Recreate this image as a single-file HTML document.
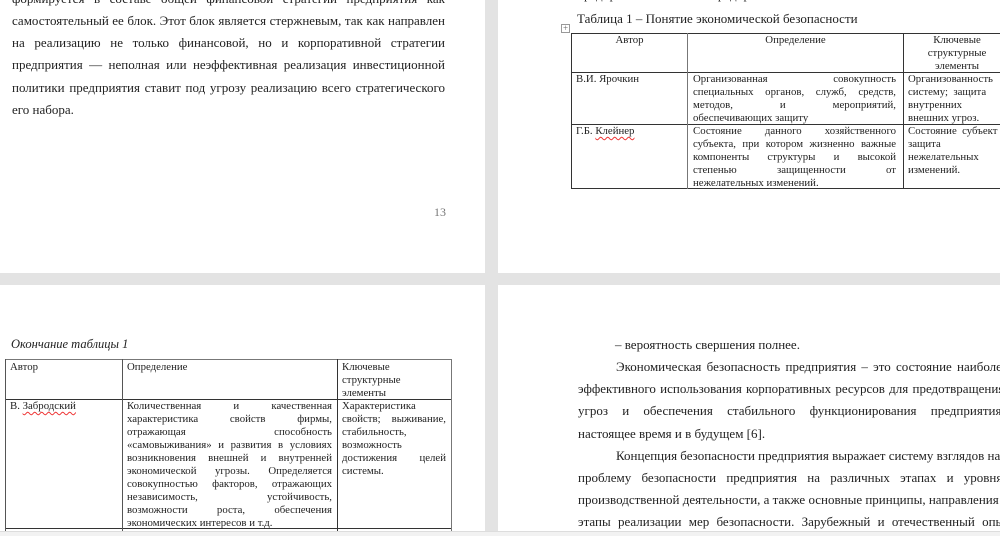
<!DOCTYPE html>
<html><head><meta charset="utf-8">
<style>
*{margin:0;padding:0;box-sizing:border-box}
body{width:1000px;height:536px;overflow:hidden;background:#e3e3e3;position:relative;font-family:"Liberation Serif","DejaVu Serif",serif;color:#222}
.page{position:absolute;background:#fff;overflow:hidden}
.l{position:absolute;white-space:nowrap;font-size:13px;line-height:16px}
.j{text-align:justify;text-align-last:justify}
.t{position:absolute;font-size:10.8px;line-height:13px;white-space:nowrap}
.hl{position:absolute;background:#333}
.red{text-decoration:underline wavy #e33;text-decoration-thickness:1px;text-underline-offset:2px}
</style></head><body>

<div class="page" style="left:0;top:0;width:485px;height:273px">
<div class="l j" style="left:12px;top:-9px;width:433px">формируется в составе общей финансовой стратегии предприятия как</div>
<div class="l j" style="left:12px;top:13px;width:433px">самостоятельный ее блок. Этот блок является стержневым, так как направлен</div>
<div class="l j" style="left:12px;top:35px;width:433px">на реализацию не только финансовой, но и корпоративной стратегии</div>
<div class="l j" style="left:12px;top:57px;width:433px">предприятия — неполная или неэффективная реализация инвестиционной</div>
<div class="l j" style="left:12px;top:80px;width:433px">политики предприятия ставит под угрозу реализацию всего стратегического</div>
<div class="l" style="left:12px;top:102px">его набора.</div>
<div class="l" style="left:434px;top:204px;color:#777;font-size:12px">13</div>
</div>

<div class="page" style="left:498px;top:0;width:502px;height:273px">
<div class="l" style="left:79px;top:-13px;word-spacing:60px">предприятия предприятия</div>
<div class="l" style="left:79px;top:11px">Таблица 1 – Понятие экономической безопасности</div>
<div style="position:absolute;left:63px;top:24px;width:9px;height:9px;border:1px solid #999;font-size:9px;line-height:7px;text-align:center;color:#666">+</div>
<div class="hl" style="left:73px;top:33px;width:440px;height:1px"></div>
<div class="hl" style="left:73px;top:72px;width:440px;height:1px"></div>
<div class="hl" style="left:73px;top:124px;width:440px;height:1px"></div>
<div class="hl" style="left:73px;top:188px;width:440px;height:1px"></div>
<div class="hl" style="left:73px;top:33px;width:1px;height:156px"></div>
<div class="hl" style="left:189px;top:33px;width:1px;height:156px;background:#777"></div>
<div class="hl" style="left:405px;top:33px;width:1px;height:156px"></div>
<div class="t" style="left:74px;top:34px;width:115px;text-align:center">Автор</div>
<div class="t" style="left:190px;top:34px;width:215px;text-align:center">Определение</div>
<div class="t" style="left:406px;top:34px;width:106px;text-align:center">Ключевые<br>структурные<br>элементы</div>
<div class="t" style="left:78px;top:73px">В.И. Ярочкин</div>
<div class="t j" style="left:195px;top:73px;width:203px">Организованная совокупность</div>
<div class="t j" style="left:195px;top:86px;width:203px">специальных органов, служб, средств,</div>
<div class="t j" style="left:195px;top:99px;width:203px">методов, и мероприятий,</div>
<div class="t" style="left:195px;top:112px">обеспечивающих защиту</div>
<div class="t" style="left:410px;top:73px">Организованность<br>систему; &nbsp;защита<br>внутренних<br>внешних угроз.</div>
<div class="t" style="left:78px;top:125px">Г.Б. <span class="red">Клейнер</span></div>
<div class="t j" style="left:195px;top:125px;width:203px">Состояние данного хозяйственного</div>
<div class="t j" style="left:195px;top:138px;width:203px">субъекта, при котором жизненно важные</div>
<div class="t j" style="left:195px;top:151px;width:203px">компоненты структуры и высокой</div>
<div class="t j" style="left:195px;top:164px;width:203px">степенью защищенности от</div>
<div class="t" style="left:195px;top:177px">нежелательных изменений.</div>
<div class="t" style="left:410px;top:125px">Состояние &nbsp;субъект<br>защита<br>нежелательных<br>изменений.</div>
</div>

<div class="page" style="left:0;top:285px;width:485px;height:246px">
<div class="l" style="left:11px;top:51px;font-style:italic;font-size:12.5px">Окончание таблицы 1</div>
<div class="hl" style="left:5px;top:74px;width:447px;height:1px;background:#777"></div>
<div class="hl" style="left:5px;top:114px;width:447px;height:1px"></div>
<div class="hl" style="left:5px;top:243px;width:447px;height:1px"></div>
<div class="hl" style="left:5px;top:74px;width:1px;height:172px;background:#555"></div>
<div class="hl" style="left:122px;top:74px;width:1px;height:172px;background:#555"></div>
<div class="hl" style="left:337px;top:74px;width:1px;height:172px"></div>
<div class="hl" style="left:451px;top:74px;width:1px;height:172px;background:#777"></div>
<div class="t" style="left:10px;top:76px">Автор</div>
<div class="t" style="left:127px;top:76px">Определение</div>
<div class="t" style="left:342px;top:76px">Ключевые<br>структурные<br>элементы</div>
<div class="t" style="left:10px;top:115px">В. <span class="red">Забродский</span></div>
<div class="t j" style="left:127px;top:115px;width:205px">Количественная и качественная</div>
<div class="t j" style="left:127px;top:128px;width:205px">характеристика свойств фирмы,</div>
<div class="t j" style="left:127px;top:141px;width:205px">отражающая способность</div>
<div class="t j" style="left:127px;top:154px;width:205px">«самовыживания» и развития в условиях</div>
<div class="t j" style="left:127px;top:167px;width:205px">возникновения внешней и внутренней</div>
<div class="t j" style="left:127px;top:180px;width:205px">экономической угрозы. Определяется</div>
<div class="t j" style="left:127px;top:193px;width:205px">совокупностью факторов, отражающих</div>
<div class="t j" style="left:127px;top:206px;width:205px">независимость, устойчивость,</div>
<div class="t j" style="left:127px;top:219px;width:205px">возможности роста, обеспечения</div>
<div class="t" style="left:127px;top:232px">экономических интересов и т.д.</div>
<div class="t" style="left:342px;top:115px">Характеристика</div>
<div class="t j" style="left:342px;top:128px;width:104px">свойств; выживание,</div>
<div class="t" style="left:342px;top:141px">стабильность,<br>возможность</div>
<div class="t j" style="left:342px;top:167px;width:104px">достижения целей</div>
<div class="t" style="left:342px;top:180px">системы.</div>
</div>

<div class="page" style="left:498px;top:285px;width:502px;height:246px">
<div class="l" style="left:117px;top:52px">– вероятность свершения полнее.</div>
<div class="l" style="left:118px;top:74px;word-spacing:2px">Экономическая безопасность предприятия – это состояние наиболее</div>
<div class="l" style="left:80px;top:96px;word-spacing:1px">эффективного использования корпоративных ресурсов для предотвращения</div>
<div class="l" style="left:80px;top:118px;word-spacing:11px">угроз и обеспечения стабильного функционирования предприятия в</div>
<div class="l" style="left:80px;top:141px">настоящее время и в будущем [6].</div>
<div class="l" style="left:118px;top:163px">Концепция безопасности предприятия выражает систему взглядов на</div>
<div class="l" style="left:80px;top:185px;word-spacing:7px">проблему безопасности предприятия на различных этапах и уровнях</div>
<div class="l" style="left:80px;top:207px">производственной деятельности, а также основные принципы, направления и</div>
<div class="l" style="left:80px;top:229px;word-spacing:4px">этапы реализации мер безопасности. Зарубежный и отечественный опыт</div>
</div>

<div style="position:absolute;left:0;top:531px;width:1000px;height:5px;background:#f2f2f2;border-top:1px solid #ddd"></div>
</body></html>
